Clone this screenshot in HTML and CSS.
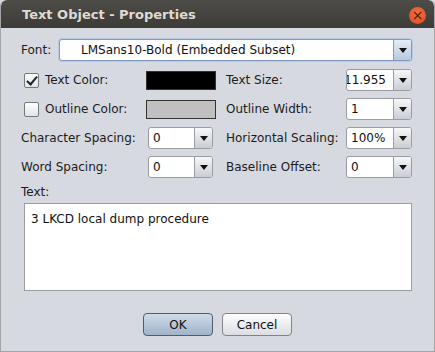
FILE: index.html
```html
<!DOCTYPE html>
<html lang="en">
<head>
    <meta charset="UTF-8">
    <title>Text Object - Properties</title>
    <link rel="stylesheet" href="styles.css">
</head>
<body>
    <div class="window">
        <div class="titlebar">
            <span class="title">Text Object - Properties</span>
            <span class="close">&times;</span>
        </div>

        <div class="content">
            <div class="font-row">
                <span class="label font-label">Font:</span>
                <div class="combo focused wide">
                    <span class="value indent">LMSans10-Bold (Embedded Subset)</span>
                    <span class="arrow"></span>
                </div>
            </div>

            <div class="grid">
                <label class="check-label"><span class="check checked"></span>Text Color:</label>
                <span class="swatch black"></span>
                <span class="label right">Text Size:</span>
                <div class="combo">
                    <span class="value clipped">11.955</span>
                    <span class="arrow"></span>
                </div>

                <label class="check-label"><span class="check"></span>Outline Color:</label>
                <span class="swatch grey"></span>
                <span class="label right">Outline Width:</span>
                <div class="combo">
                    <span class="value">1</span>
                    <span class="arrow"></span>
                </div>

                <span class="label">Character Spacing:</span>
                <div class="combo small">
                    <span class="value">0</span>
                    <span class="arrow"></span>
                </div>
                <span class="label right">Horizontal Scaling:</span>
                <div class="combo">
                    <span class="value">100%</span>
                    <span class="arrow"></span>
                </div>

                <span class="label">Word Spacing:</span>
                <div class="combo small">
                    <span class="value">0</span>
                    <span class="arrow"></span>
                </div>
                <span class="label right">Baseline Offset:</span>
                <div class="combo">
                    <span class="value">0</span>
                    <span class="arrow"></span>
                </div>
            </div>

            <div class="label text-label">Text:</div>
            <div class="textarea">3 LKCD local dump procedure</div>

            <div class="buttons">
                <button class="btn default">OK</button>
                <button class="btn">Cancel</button>
            </div>
        </div>
    </div>
</body>
</html>
```

FILE: styles.css
```css
body {
    margin: 0;
    background: #d6d9df;
    font-family: "DejaVu Sans", sans-serif;
    font-size: 12px;
    color: #1c1c1c;
}
.window {
    width: 435px;
    height: 352px;
    box-sizing: border-box;
    background: #d6d9df;
    border: 1px solid #a3a5a9;
    border-top: none;
    border-radius: 6px 6px 0 0;
    overflow: hidden;
}
.titlebar {
    height: 28px;
    background: linear-gradient(#4d4c47, #3c3b37);
    display: flex;
    align-items: center;
    padding: 0 8px 0 21px;
    border-radius: 6px 6px 0 0;
}
.title {
    color: #dfdbd2;
    font-weight: bold;
    font-size: 13px;
    flex: 1;
}
.close {
    width: 17px;
    height: 17px;
    border-radius: 50%;
    background: radial-gradient(circle at 50% 35%, #f2703f, #e0481b);
    color: #4a1a0a;
    font-size: 14px;
    line-height: 16px;
    text-align: center;
    margin-top: 2px;
}
.content {
    padding: 11px 22px 0 20px;
}
.label {
    white-space: nowrap;
    line-height: 22px;
}
.font-row {
    display: flex;
    align-items: center;
    height: 22px;
}
.font-label {
    width: 38px;
}
.combo {
    display: flex;
    height: 22px;
    box-sizing: border-box;
    border: 1px solid #9a9da3;
    border-radius: 3px;
    background: #fff;
    overflow: hidden;
}
.combo.wide {
    flex: 1;
}
.combo.small {
    margin: 0 3px 0 2px;
}
.combo.focused {
    border-color: #7d9bc4;
    box-shadow: 0 0 0 1px #b9cbe3;
}
.value {
    flex: 1;
    padding-left: 4px;
    line-height: 20px;
    color: #111;
    white-space: nowrap;
    overflow: hidden;
}
.value.indent {
    padding-left: 21px;
}
.value.clipped {
    padding-left: 0;
    text-indent: -3px;
}
.arrow {
    width: 17px;
    border-left: 1px solid #9a9da3;
    background: linear-gradient(#f6f7f9, #c9cdd4);
    position: relative;
}
.focused .arrow {
    border-left-color: #7d9bc4;
    background: linear-gradient(#e6edf5, #b8c9dc);
}
.arrow::after {
    content: "";
    position: absolute;
    left: 5px;
    top: 8px;
    border-left: 4px solid transparent;
    border-right: 4px solid transparent;
    border-top: 5px solid #111;
}
.grid {
    display: grid;
    grid-template-columns: 125px 70px 1fr 66px;
    grid-auto-rows: 22px;
    row-gap: 7px;
    margin-top: 8px;
}
.right {
    padding-left: 10px;
}
.check-label {
    display: flex;
    align-items: center;
    gap: 6px;
    padding-left: 3px;
}
.check {
    width: 13px;
    height: 13px;
    border: 1px solid #75787d;
    border-radius: 2px;
    background: linear-gradient(#ffffff, #e1e4e8);
    position: relative;
}
.check.checked::after {
    content: "";
    position: absolute;
    left: 4px;
    top: 0;
    width: 4px;
    height: 9px;
    border-right: 2px solid #222;
    border-bottom: 2px solid #222;
    transform: rotate(40deg);
}
.swatch {
    align-self: center;
    height: 19px;
    box-sizing: border-box;
    border: 1px solid #333;
}
.black {
    background: #000;
}
.grey {
    background: #c0c0c0;
}
.text-label {
    margin-top: 6px;
    line-height: 17px;
}
.textarea {
    margin: 2px 0 0 3px;
    height: 88px;
    box-sizing: border-box;
    background: #fff;
    border: 1px solid #9a9da3;
    padding: 8px 6px;
    color: #111;
}
.buttons {
    display: flex;
    justify-content: center;
    gap: 9px;
    margin-top: 22px;
    padding-left: 2px;
}
.btn {
    width: 70px;
    height: 23px;
    font-family: "DejaVu Sans", sans-serif;
    font-size: 12px;
    color: #111;
    border: 1px solid #80838a;
    border-radius: 4px;
    background: linear-gradient(#fdfdfd, #dcdee2);
    padding: 0;
}
.btn.default {
    border-color: #4f5d6e;
    background: linear-gradient(#d0dbe7, #9fb3ca);
}
```
